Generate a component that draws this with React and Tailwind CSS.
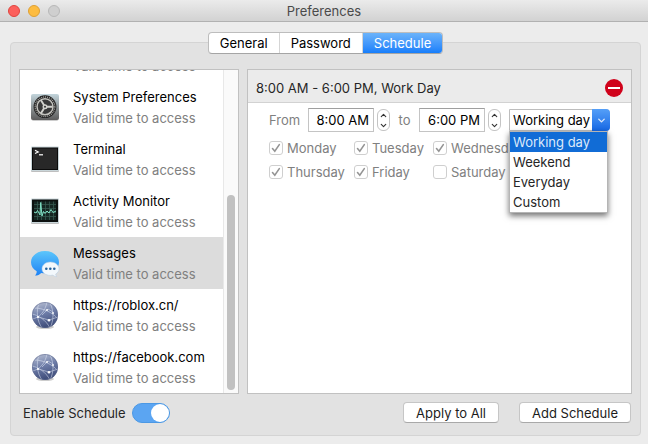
import { useState } from "react";
import { ChevronDown, ChevronUp } from "lucide-react";

const PreferencesIcon = () => (
  <svg width="30" height="30" viewBox="0 0 30 30" aria-hidden="true">
    <defs>
      <linearGradient id="prefBg" x1="0" y1="0" x2="0" y2="1">
        <stop offset="0" stopColor="#c3d5dc" />
        <stop offset="0.5" stopColor="#8f9698" />
        <stop offset="1" stopColor="#5c5c5c" />
      </linearGradient>
    </defs>
    <rect x="1.5" y="3" width="27" height="26" rx="2" fill="#000" opacity="0.2" />
    <rect x="1" y="2" width="28" height="26" rx="2" fill="url(#prefBg)" />
    <circle cx="15" cy="14.7" r="11.4" fill="#222" />
    <circle cx="15" cy="14.7" r="9.8" fill="none" stroke="#a9a9a5" strokeWidth="1.4" strokeDasharray="1 1" />
    <circle cx="15" cy="14.7" r="8" fill="#3a3a3a" stroke="#c4c4bf" strokeWidth="1.5" />
    <path d="M15 14.7H22.5M15 14.7L11 8.2M15 14.7L11 21.2" stroke="#d2d2cd" strokeWidth="1.9" />
    <circle cx="15" cy="14.7" r="2.5" fill="#d2d2cd" />
    <circle cx="15" cy="14.7" r="1" fill="#333" />
  </svg>
);

const TerminalIcon = () => (
  <svg width="30" height="30" viewBox="0 0 30 30" aria-hidden="true">
    <rect x="1" y="4" width="28" height="24" rx="1" fill="#000" opacity="0.25" />
    <rect x="1" y="2.5" width="28" height="24.5" rx="1" fill="#c9d6da" />
    <rect x="2" y="3.5" width="26" height="22.5" fill="#0b0b0b" />
    <rect x="3" y="4.5" width="24" height="20.5" fill="#282828" />
    <path d="M5 6.2L8.3 7.9L5 9.6" fill="none" stroke="#fff" strokeWidth="1.1" />
    <path d="M9 10.8H13" stroke="#fff" strokeWidth="1.2" />
  </svg>
);

const ActivityIcon = () => (
  <svg width="30" height="30" viewBox="0 0 30 30" aria-hidden="true">
    <rect x="1" y="4" width="28" height="24" rx="1" fill="#000" opacity="0.25" />
    <rect x="1" y="2.5" width="28" height="24.5" rx="1" fill="#c9d6da" />
    <rect x="2" y="3.5" width="26" height="22.5" fill="#0d1110" />
    <rect x="4" y="5.5" width="22" height="18.5" fill="#142622" />
    <path
      d="M7.5 5.5V24M11.5 5.5V24M15.5 5.5V24M19.5 5.5V24M23.5 5.5V24M4 8.5H26M4 12.5H26M4 16.5H26M4 20.5H26"
      stroke="#35594f" strokeWidth="0.8"
    />
    <path
      d="M4 16L6 17L7.5 14.5L9 17L10 19L10.7 6.5L12 20L13.5 15.5L15 17.5L17 15L19 17L21 13.5L23 16.5L26 15"
      fill="none" stroke="#7fe0c4" strokeWidth="1"
    />
  </svg>
);

const MessagesIcon = () => (
  <svg width="30" height="30" viewBox="0 0 30 30" aria-hidden="true">
    <defs>
      <linearGradient id="bubble" x1="0" y1="0" x2="0" y2="1">
        <stop offset="0" stopColor="#5cc6fb" />
        <stop offset="1" stopColor="#1e82f5" />
      </linearGradient>
    </defs>
    <path
      d="M15 3C7.3 3 1 7.8 1 14.2C1 18 3.2 21.2 6.7 23.2C6.8 25 6 26.5 5 27.6C7.5 27.6 9.8 26.4 11.2 24.9C12.4 25.2 13.7 25.3 15 25.3C22.7 25.3 29 20.5 29 14.2C29 7.8 22.7 3 15 3Z"
      fill="url(#bubble)"
    />
    <path
      d="M20.3 14C15.8 14 12 16.9 12 20.8C12 24.7 15.8 27.4 20.3 27.4C21.2 27.4 22.1 27.3 22.9 27.1C24 28 25.3 28.7 26.8 28.7C26.1 28 25.7 27.1 25.7 26C27.7 24.9 29 23.1 29 20.8C29 16.9 25 14 20.3 14Z"
      fill="#f3f8fc" stroke="#b5cbe0" strokeWidth="0.5"
    />
    <circle cx="16.3" cy="20.8" r="1.3" fill="#26639e" />
    <circle cx="20.3" cy="20.8" r="1.3" fill="#26639e" />
    <circle cx="24.3" cy="20.8" r="1.3" fill="#26639e" />
  </svg>
);

const GlobeIcon = () => (
  <svg width="30" height="30" viewBox="0 0 30 30" aria-hidden="true">
    <defs>
      <linearGradient id="globe" x1="0.3" y1="0" x2="0.6" y2="1">
        <stop offset="0" stopColor="#b3bbd0" />
        <stop offset="0.45" stopColor="#6e7da8" />
        <stop offset="1" stopColor="#3b4976" />
      </linearGradient>
      <clipPath id="globeClip">
        <circle cx="15" cy="15" r="13" />
      </clipPath>
    </defs>
    <ellipse cx="15" cy="27" rx="9" ry="2" fill="#000" opacity="0.2" />
    <circle cx="15" cy="15" r="13" fill="url(#globe)" />
    <g clipPath="url(#globeClip)" fill="none" stroke="#dfe6f5" strokeWidth="0.7" opacity="0.75">
      <path d="M2 19C9 18 15 12 17 2M4 8C13 8 22 12 28 19M9 3C6 11 7 21 12 28M20 3C24 11 24 20 20 28" />
      <path d="M2 14C8 15 16 20 20 28M8 17L19 20L28 17M12 15L18 9L23 12" />
    </g>
    <g fill="#fff">
      <circle cx="8" cy="17" r="1.1" />
      <circle cx="19" cy="20.3" r="1.3" />
      <circle cx="17" cy="10" r="0.9" />
      <circle cx="23" cy="13" r="0.9" />
    </g>
    <circle cx="15" cy="15" r="12.6" fill="none" stroke="#5a668a" strokeWidth="0.8" opacity="0.6" />
  </svg>
);

const apps = [
  { name: "App Store", icon: GlobeIcon },
  { name: "System Preferences", icon: PreferencesIcon },
  { name: "Terminal", icon: TerminalIcon },
  { name: "Activity Monitor", icon: ActivityIcon },
  { name: "Messages", icon: MessagesIcon },
  { name: "https://roblox.cn/", icon: GlobeIcon },
  { name: "https://facebook.com", icon: GlobeIcon },
];

const tabs = ["General", "Password", "Schedule"];
const ranges = ["Working day", "Weekend", "Everyday", "Custom"];
const days = [
  { name: "Monday", on: true },
  { name: "Tuesday", on: true },
  { name: "Wednesday", on: true },
  { name: "Thursday", on: true },
  { name: "Friday", on: true },
  { name: "Saturday", on: false },
];

const TimeField = ({ label, value }) => (
  <div className="flex shrink-0 items-center gap-[3px]">
    <input
      type="text"
      aria-label={label}
      defaultValue={value}
      className="h-6 w-[66px] border border-[#c4c4c4] border-t-[#9f9f9f] bg-white pr-1 text-right text-black focus:outline-none"
    />
    <div className="flex h-[22px] w-[13px] flex-col overflow-hidden rounded-md border border-[#c4c4c4] bg-white text-[#333]">
      <button type="button" aria-label={`${label} later`} className="flex flex-1 items-center justify-center">
        <ChevronUp size={9} strokeWidth={3} />
      </button>
      <button type="button" aria-label={`${label} earlier`} className="flex flex-1 items-center justify-center">
        <ChevronDown size={9} strokeWidth={3} />
      </button>
    </div>
  </div>
);

const PushButton = ({ children }) => (
  <button
    type="button"
    className="h-[21px] rounded border border-[#c6c6c6] border-b-[#a9a9a9] bg-white px-3 leading-4 text-[#1c1c1c]"
  >
    {children}
  </button>
);

const App = () => {
  const [tab, setTab] = useState("Schedule");
  const [selected, setSelected] = useState("Messages");
  const [range, setRange] = useState("Working day");
  const [enabled, setEnabled] = useState(true);

  return (
    <div className="flex h-screen flex-col bg-[#ececec] font-[Inter,sans-serif] text-[13px] leading-4 text-[#262626]">
      <header className="relative flex h-[22px] shrink-0 items-center justify-center border-b border-[#b1b1b1] bg-linear-to-b from-[#ebebeb] to-[#d2d2d2]">
        <div className="absolute left-2 flex gap-2">
          <button type="button" aria-label="Close" className="size-3 rounded-full border border-[#e0443e] bg-[#fc605c]" />
          <button type="button" aria-label="Minimize" className="size-3 rounded-full border border-[#dea034] bg-[#fdbc40]" />
          <button type="button" aria-label="Zoom" className="size-3 rounded-full border border-[#b8b8b8] bg-[#cfcfcf]" />
        </div>
        <h1 className="text-[#4a4a4a]">Preferences</h1>
      </header>

      <main className="relative mt-5 mr-[7px] mb-2 ml-[10px] flex min-h-0 flex-1 flex-col rounded border border-[#d4d4d4] bg-[#e2e2e2] px-2 pt-[26px]">
        <nav className="absolute inset-x-0 -top-[11px] flex justify-center">
          <div className="flex h-[22px] overflow-hidden rounded border border-[#bdbdbd] border-b-[#a5a5a5] bg-white">
            {tabs.map((name) => (
              <button
                key={name}
                type="button"
                onClick={() => setTab(name)}
                className={
                  tab === name
                    ? "bg-linear-to-b from-[#6bb3fa] to-[#157efb] px-[11px] text-white"
                    : "border-r border-[#d5d5d5] px-[11px] text-black"
                }
              >
                {name}
              </button>
            ))}
          </div>
        </nav>

        <div className="flex min-h-0 flex-1 gap-2">
          <section className="flex w-[220px] shrink-0 border border-[#c1c1c1] bg-white">
            <ul className="flex min-w-0 flex-1 flex-col justify-end overflow-hidden">
              {apps.map(({ name, icon: Icon }) => (
                <li key={name} className={selected === name ? "bg-[#dcdcdc]" : "bg-white"}>
                  <button
                    type="button"
                    onClick={() => setSelected(name)}
                    className="flex h-[52px] w-full items-center gap-[13px] pl-[10px] text-left"
                  >
                    <Icon />
                    <span className="flex flex-col gap-[5px] pt-px whitespace-nowrap">
                      <span className="text-black">{name}</span>
                      <span className="text-[#808080]">Valid time to access</span>
                    </span>
                  </button>
                </li>
              ))}
            </ul>
            <div className="flex w-[15px] flex-col justify-end border-l border-[#e8e8e8] bg-[#fafafa] px-[3px] pb-[3px]">
              <div className="h-[61%] w-2 rounded-full bg-[#c1c1c1]" />
            </div>
          </section>

          <section className="min-w-0 flex-1 border border-[#c1c1c1] bg-white">
            <div className="flex h-[33px] items-center justify-between border-b border-[#d2d2d2] bg-[#ebebeb] px-2 pt-1">
              <h2>8:00 AM - 6:00 PM, Work Day</h2>
              <button
                type="button"
                aria-label="Remove schedule"
                className="flex size-[18px] items-center justify-center rounded-full bg-[#d0021b]"
              >
                <span className="h-[2px] w-3 bg-white" />
              </button>
            </div>

            <div className="pt-[5px] pl-[21px]">
              <div className="flex items-center">
                <span className="w-[39px] shrink-0 text-[#808080]">From</span>
                <TimeField label="From" value="8:00 AM" />
                <span className="w-[29px] shrink-0 text-center text-[#808080]">to</span>
                <TimeField label="To" value="6:00 PM" />
                <div className="relative ml-2 w-[101px] shrink-0">
                  <select
                    aria-label="Repeat"
                    value={range}
                    onChange={(e) => setRange(e.target.value)}
                    className="block h-[22px] w-full appearance-none rounded-r border border-[#bdbdbd] bg-white pl-[3px] text-black focus:outline-none"
                  >
                    {ranges.map((r) => (
                      <option key={r}>{r}</option>
                    ))}
                  </select>
                  <span className="pointer-events-none absolute inset-y-0 right-0 flex w-[18px] items-center justify-center rounded-r bg-linear-to-b from-[#559ff8] to-[#1467e4] text-[#dce9fa]">
                    <ChevronDown size={11} strokeWidth={3} />
                  </span>
                  <ul
                    role="listbox"
                    aria-label="Repeat options"
                    className="absolute top-[22px] left-0 z-10 w-[99px] border border-[#b5b5b5] bg-white shadow-[0_3px_6px_rgba(0,0,0,0.55)]"
                  >
                    {ranges.map((r) => (
                      <li
                        key={r}
                        role="option"
                        aria-selected={range === r}
                        onClick={() => setRange(r)}
                        className={
                          range === r
                            ? "h-5 bg-[#116cd6] pl-[3px] leading-5 text-[#dce9fa]"
                            : "h-5 pl-[3px] leading-5"
                        }
                      >
                        {r}
                      </li>
                    ))}
                  </ul>
                </div>
              </div>

              <div className="mt-2 grid grid-cols-[85px_79px_90px] gap-y-2">
                {days.map((day) => (
                  <label key={day.name} className="flex items-center gap-1 whitespace-nowrap text-[#808080]">
                    <span className="relative flex size-[14px]">
                      <input
                        type="checkbox"
                        defaultChecked={day.on}
                        className="peer size-[14px] appearance-none rounded-[3px] border border-[#cfcfcf] bg-white"
                      />
                      <svg
                        viewBox="0 0 14 14"
                        className="pointer-events-none absolute inset-0 hidden peer-checked:block"
                        aria-hidden="true"
                      >
                        <path d="M3.5 7.5L5.8 10.2L10.3 3.6" fill="none" stroke="#949494" strokeWidth="1.6" strokeLinecap="round" />
                      </svg>
                    </span>
                    {day.name}
                  </label>
                ))}
              </div>
            </div>
          </section>
        </div>

        <footer className="flex h-[41px] shrink-0 items-center justify-between pr-px pb-1 pl-1">
          <label className="flex items-center gap-[6px]">
            Enable Schedule
            <input
              type="checkbox"
              role="switch"
              checked={enabled}
              onChange={() => setEnabled(!enabled)}
              className="peer sr-only"
            />
            <span className="flex h-5 w-[38px] items-center rounded-full border border-[#4b98e4] bg-[#aaa] peer-checked:justify-end peer-checked:bg-[#5ba5f2]">
              <span className="size-[18px] rounded-full bg-white" />
            </span>
          </label>
          <div className="flex gap-5">
            <PushButton>Apply to All</PushButton>
            <PushButton>Add Schedule</PushButton>
          </div>
        </footer>
      </main>
    </div>
  );
};

export default App;
